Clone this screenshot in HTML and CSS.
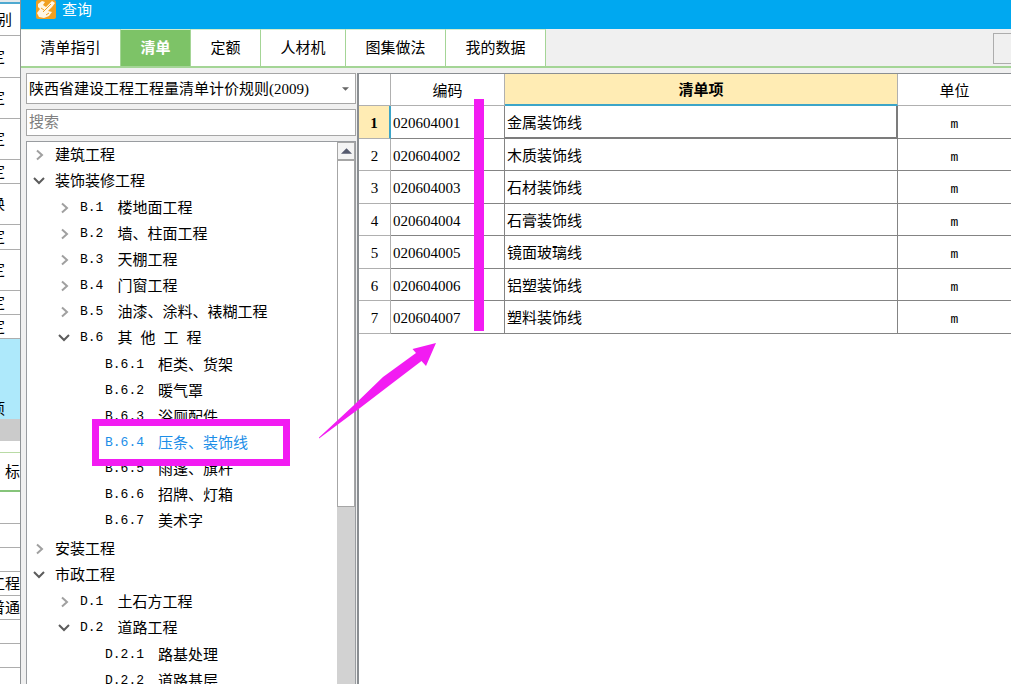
FILE: index.html
```html
<!DOCTYPE html>
<html lang="zh-CN">
<head>
<meta charset="utf-8">
<title>查询</title>
<link rel="stylesheet" href="styles.css">
</head>
<body>
<div class="screen">
  <aside class="backdrop">
    <div class="strip-top"></div>
    <div class="strip-row h32 shifted"><span>别</span></div>
    <div class="strip-row h42 clip"><span>定</span></div>
    <div class="strip-row h41 clip"><span>定</span></div>
    <div class="strip-row h41 clip"><span>定</span></div>
    <div class="strip-row h24 clip"><span>定</span></div>
    <div class="strip-row h41 clip"><span>换</span></div>
    <div class="strip-row h25 clip"><span>定</span></div>
    <div class="strip-row h41 clip"><span>定</span></div>
    <div class="strip-row h24 clip"><span>定</span></div>
    <div class="strip-row h24 clip"><span>定</span></div>
    <div class="strip-active clip"><span>项</span></div>
    <div class="strip-scroll"></div>
    <div class="strip-gap"></div>
    <div class="strip-tab"><span>标</span></div>
    <div class="strip-row h32"></div>
    <div class="strip-row h24"></div>
    <div class="strip-row h24"></div>
    <div class="strip-row h24"><span>工程</span></div>
    <div class="strip-row h24"><span>普通</span></div>
    <div class="strip-row h24"></div>
    <div class="strip-row h24"></div>
    <div class="strip-row h24"></div>
  </aside>
  <main class="dialog">
    <header class="titlebar">
      <svg class="logo" viewBox="0 0 20 20" aria-hidden="true">
        <rect width="20" height="19" rx="2" fill="#f0a020"/>
        <path d="M2 4l4-3 3 1-2 3 3 2 6-6 3 2-3 4-4 4 4 1-3 4-5 2-5-1-2-4 3-4-2-2z" fill="#fff6e4"/>
        <path d="M7 12l8-8M5 8l3 2M10 15l3-2" stroke="#f0a020" stroke-width="1" fill="none"/>
      </svg>
      <h1 class="title">查询</h1>
    </header>
    <nav class="tabs">
      <button class="tab w100">清单指引</button>
      <button class="tab w70 active">清单</button>
      <button class="tab w70">定额</button>
      <button class="tab w85">人材机</button>
      <button class="tab w100">图集做法</button>
      <button class="tab w100">我的数据</button>
      <button class="side-button" aria-label="更多"></button>
    </nav>
    <div class="content">
      <section class="sidebar">
        <div class="combo">
          <select class="combo-select" aria-label="清单规则"><option>陕西省建设工程工程量清单计价规则(2009)</option></select>
          <svg class="combo-arrow" viewBox="0 0 8 4" aria-hidden="true"><path d="M0 0h8L4 4z" fill="#666"/></svg>
        </div>
        <input class="search" type="text" placeholder="搜索" aria-label="搜索">
        <div class="tree">
          <ul class="tree-list">
            <li><button class="node"><svg class="chev" viewBox="0 0 12 12"><path d="M4 1.500l5 4.500-5 4.500"/></svg><span>建筑工程</span></button></li>
            <li><button class="node"><svg class="chev open" viewBox="0 0 12 12"><path d="M1 3l5 5 5-5"/></svg><span>装饰装修工程</span></button>
              <ul>
                <li><button class="node"><svg class="chev" viewBox="0 0 12 12"><path d="M4 1.500l5 4.500-5 4.500"/></svg><span class="code">B.1</span><span>楼地面工程</span></button></li>
                <li><button class="node"><svg class="chev" viewBox="0 0 12 12"><path d="M4 1.500l5 4.500-5 4.500"/></svg><span class="code">B.2</span><span>墙、柱面工程</span></button></li>
                <li><button class="node"><svg class="chev" viewBox="0 0 12 12"><path d="M4 1.500l5 4.500-5 4.500"/></svg><span class="code">B.3</span><span>天棚工程</span></button></li>
                <li><button class="node"><svg class="chev" viewBox="0 0 12 12"><path d="M4 1.500l5 4.500-5 4.500"/></svg><span class="code">B.4</span><span>门窗工程</span></button></li>
                <li><button class="node"><svg class="chev" viewBox="0 0 12 12"><path d="M4 1.500l5 4.500-5 4.500"/></svg><span class="code">B.5</span><span>油漆、涂料、裱糊工程</span></button></li>
                <li><button class="node"><svg class="chev open" viewBox="0 0 12 12"><path d="M1 3l5 5 5-5"/></svg><span class="code">B.6</span><span class="spaced"><span>其</span><span>他</span><span>工</span><span>程</span></span></button>
                  <ul>
                    <li><button class="node leaf"><span class="code">B.6.1</span><span>柜类、货架</span></button></li>
                    <li><button class="node leaf"><span class="code">B.6.2</span><span>暖气罩</span></button></li>
                    <li><button class="node leaf"><span class="code">B.6.3</span><span>浴厕配件</span></button></li>
                    <li><button class="node leaf selected"><span class="code">B.6.4</span><span>压条、装饰线</span></button></li>
                    <li><button class="node leaf"><span class="code">B.6.5</span><span>雨篷、旗杆</span></button></li>
                    <li><button class="node leaf"><span class="code">B.6.6</span><span>招牌、灯箱</span></button></li>
                    <li><button class="node leaf"><span class="code">B.6.7</span><span>美术字</span></button></li>
                  </ul>
                </li>
              </ul>
            </li>
            <li><button class="node"><svg class="chev" viewBox="0 0 12 12"><path d="M4 1.500l5 4.500-5 4.500"/></svg><span>安装工程</span></button></li>
            <li><button class="node"><svg class="chev open" viewBox="0 0 12 12"><path d="M1 3l5 5 5-5"/></svg><span>市政工程</span></button>
              <ul>
                <li><button class="node"><svg class="chev" viewBox="0 0 12 12"><path d="M4 1.500l5 4.500-5 4.500"/></svg><span class="code">D.1</span><span>土石方工程</span></button></li>
                <li><button class="node"><svg class="chev open" viewBox="0 0 12 12"><path d="M1 3l5 5 5-5"/></svg><span class="code">D.2</span><span>道路工程</span></button>
                  <ul>
                    <li><button class="node leaf"><span class="code">D.2.1</span><span>路基处理</span></button></li>
                    <li><button class="node leaf"><span class="code">D.2.2</span><span>道路基层</span></button></li>
                  </ul>
                </li>
              </ul>
            </li>
          </ul>
          <div class="scrollbar">
            <button class="scroll-up" aria-label="向上滚动"><svg viewBox="0 0 12 6" aria-hidden="true"><path d="M0 6h12L6 0z" fill="#555a6e"/></svg></button>
            <div class="scroll-thumb"></div>
          </div>
        </div>
      </section>
      <section class="grid-panel">
        <table class="grid">
          <colgroup><col class="col-index"><col class="col-code"><col><col class="col-unit"></colgroup>
          <thead><tr><th></th><th>编码</th><th class="current">清单项</th><th>单位</th></tr></thead>
          <tbody>
            <tr class="current-row"><th>1</th><td>020604001</td><td class="focus">金属装饰线</td><td class="unit">m</td></tr>
            <tr><th>2</th><td>020604002</td><td>木质装饰线</td><td class="unit">m</td></tr>
            <tr><th>3</th><td>020604003</td><td>石材装饰线</td><td class="unit">m</td></tr>
            <tr><th>4</th><td>020604004</td><td>石膏装饰线</td><td class="unit">m</td></tr>
            <tr><th>5</th><td>020604005</td><td>镜面玻璃线</td><td class="unit">m</td></tr>
            <tr><th>6</th><td>020604006</td><td>铝塑装饰线</td><td class="unit">m</td></tr>
            <tr><th>7</th><td>020604007</td><td>塑料装饰线</td><td class="unit">m</td></tr>
          </tbody>
        </table>
      </section>
    </div>
  </main>
  <div class="mark-box"></div>
  <div class="mark-bar"></div>
  <svg class="mark-arrow" viewBox="0 0 120 98" aria-hidden="true"><path d="M1 95.500L35 64 65 35 98 11 94.500 7 118 1 108 24 103.500 19 72 43 42 66 1 96.500z" fill="#f21cf2"/></svg>
</div>
</body>
</html>
```
FILE: styles.css
```css
* { box-sizing: border-box; }

body {
  margin: 0;
  overflow: hidden;
  color: #000;
  background: #fff;
  font: 15px/20px "Liberation Serif", "Noto Sans CJK SC", sans-serif;
}

button, input, select { font: inherit; color: inherit; margin: 0; }
button { background: none; border: 0; padding: 0; }
ul { list-style: none; margin: 0; padding: 0; }

.screen { position: relative; display: flex; height: 100vh; overflow: hidden; }

/* window behind the dialog */
.backdrop {
  flex: 0 0 21px;
  overflow: hidden;
  border-right: 1px solid #8f9396;
}
.strip-top { height: 4px; background: #e4e8ea; border-bottom: 2px solid #4fa9d0; }
.strip-row, .strip-active, .strip-tab {
  display: flex;
  align-items: center;
  justify-content: flex-end;
  white-space: nowrap;
  border-bottom: 1px solid #adadad;
}
.h24 { height: 24px; }
.h25 { height: 25px; }
.h32 { height: 32px; }
.h41 { height: 41px; }
.h42 { height: 42px; }
.shifted { padding-right: 8px; }
.clip { padding-right: 15px; }
.strip-active { height: 80px; background: #aee9fb; align-items: flex-end; border: 0; }
.strip-scroll { height: 22px; background: #cbcbcb; }
.strip-gap { height: 12px; border-bottom: 1px solid #b9dba5; }
.strip-tab { height: 39px; border-bottom: 2px solid #86c47a; }

.dialog { flex: 1; min-width: 0; display: flex; flex-direction: column; background: #f0f0f0; }

.titlebar {
  height: 29px;
  flex: none;
  display: flex;
  gap: 6px;
  padding-left: 15px;
  background: #00a8f0;
  color: #fff;
}
.logo { width: 20px; height: 20px; flex: none; }
.title { margin: 0; font-size: 15px; line-height: 20px; font-weight: 400; }

.tabs { display: flex; height: 39px; flex: none; border-bottom: 2px solid #a4d596; }
.tab { background: #fff; border-right: 1px solid #a4d596; border-top: 1px solid #d4edcb; }
.tab.active { background: #7dc367; color: #fff; font-weight: 700; }
.w70 { width: 70px; }
.w85 { width: 85px; }
.w100 { width: 100px; }
.side-button {
  width: 18px;
  height: 31px;
  margin: 4px 0 0 auto;
  border: 1px solid #adadad;
  border-right: 0;
}

.content { flex: 1; min-height: 0; display: flex; padding: 5px 0 0 5px; gap: 1px; }
.sidebar { width: 330px; flex: none; display: flex; flex-direction: column; gap: 5px; }

.combo { position: relative; height: 31px; flex: none; }
.combo-select {
  width: 100%;
  height: 100%;
  appearance: none;
  padding: 0 24px 0 2px;
  background: #fff;
  border: 1px solid #a6a6a6;
  border-radius: 0;
}
.combo-arrow { position: absolute; right: 7px; top: 14px; width: 7px; height: 4px; }
.search {
  height: 27px;
  flex: none;
  padding: 0 2px;
  background: #fff;
  border: 1px solid #a6a6a6;
}
.search::placeholder { color: #808080; opacity: 1; }

.tree {
  flex: 1;
  min-height: 0;
  display: flex;
  overflow: hidden;
  background: #fff;
  border: 1px solid #999ca0;
  border-bottom: 0;
}
.tree-list { flex: 1; }
.tree-list ul { padding: 1px 0 1px 25px; }
.node {
  display: flex;
  align-items: center;
  width: 100%;
  height: 26px;
  padding-left: 6px;
  white-space: nowrap;
}
.node.leaf { padding-left: 28px; }
.node.selected { color: #1c8ee8; }
.chev {
  width: 12px;
  height: 12px;
  margin-right: 10px;
  fill: none;
  stroke: #a0a0a0;
  stroke-width: 2;
}
.chev.open { stroke: #5c5c5c; }
.code { font-family: "Liberation Mono", monospace; font-size: 13px; margin-right: 14px; }
.spaced { display: flex; gap: 8px; }

.scrollbar { width: 18px; flex: none; background: #d2d2d2; }
.scroll-up {
  display: flex;
  align-items: center;
  justify-content: center;
  width: 100%;
  height: 18px;
  background: #f4f4f4;
  border: 1px solid #a6a6a6;
}
.scroll-up svg { width: 11px; height: 6px; }
.scroll-thumb { height: 347px; background: #fff; border: 1px solid #a6a6a6; }

.grid-panel { flex: 1; min-width: 0; background: #fff; border: solid #8a8e92; border-width: 1px 0 0 2px; }
.grid { width: 100%; table-layout: fixed; border-collapse: separate; border-spacing: 0; }
.col-index { width: 32px; }
.col-code { width: 114px; }
.col-unit { width: 113px; }
.grid th, .grid td {
  height: 32px;
  padding: 2px 2px 0;
  line-height: 20px;
  border: solid #848484;
  border-width: 0 1px 1px 0;
}
.grid tr > :last-child { border-right: 0; }
.grid tbody tr:nth-child(odd) > * { height: 33px; }
.grid th { font-weight: 400; border-color: #b0b0b0; }
.grid thead .current { background: #ffecb4; font-weight: 700; border-bottom: 2px solid #3ca5c8; }
.grid .current-row th { background: #ffecb4; font-weight: 700; border-right: 2px solid #3ca5c8; }
.grid .focus { border-right: 2px solid #7c7c7c; border-bottom: 2px solid #7c7c7c; }
.grid .unit { padding-top: 6px; text-align: center; font-family: "Liberation Mono", monospace; font-size: 13px; }

/* highlight marks lying over the dialog */
.mark-box { position: absolute; left: 92px; top: 419px; width: 198px; height: 47px; border: 7px solid #f21cf2; }
.mark-bar { position: absolute; left: 474px; top: 99px; width: 10px; height: 232px; background: #f21cf2; }
.mark-arrow { position: absolute; left: 318px; top: 342px; width: 120px; height: 98px; }
```
